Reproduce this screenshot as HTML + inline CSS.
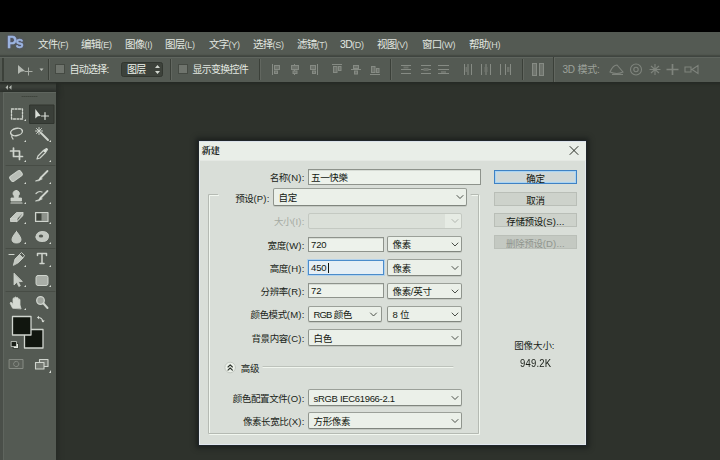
<!DOCTYPE html>
<html lang="zh-CN">
<head>
<meta charset="utf-8">
<title>新建</title>
<style>
html,body{margin:0;padding:0;}
body{width:720px;height:460px;overflow:hidden;position:relative;background:#2e322c;
  font-family:"Liberation Sans","Noto Sans CJK SC",sans-serif;font-size:11px;color:#e1e6df;}
.abs,.abs>*{position:absolute;}
div,span{position:absolute;white-space:nowrap;box-sizing:border-box;}
svg{position:absolute;overflow:visible;}
#topblack{left:0;top:0;width:720px;height:32px;background:#000;}
#menubar{left:0;top:32px;width:720px;height:24px;background:#545a53;}
#menubar span{top:5px;font-size:10.5px;line-height:14px;color:#e3e8e1;letter-spacing:-0.7px;}
#menubar span i{font-style:normal;font-size:9px;letter-spacing:-0.3px;color:#d7dcd5;}
#ps{transform:scale(0.950,1.120);transform-origin:0 85%;left:7.300px;top:0.500px !important;font-size:15.500px !important;line-height:20px !important;font-weight:bold;color:#9bb3df !important;letter-spacing:-1.500px !important;-webkit-text-stroke:0.300px #9bb3df;text-shadow:0 0 3px rgba(80,80,130,0.9);}
#optbar{z-index:3;left:0;top:56px;width:720px;height:26px;background:#545a53;border-top:1px solid #3f4540;box-shadow:inset 0 1px 0 #5f655e,0 1px 2px 1px #262a25;}
#optbar span{font-size:10px;line-height:14px;color:#e3e8e1;letter-spacing:-0.75px;}
.vsep{width:1px;background:#3d423b;top:4px;height:17px;}
.chk{width:10px;height:10px;background:#6d726b;border:1px solid #464b44;top:7px;}
#toolhead{left:0;top:82px;width:56px;height:10px;background:#3e433d;box-shadow:0 0 5px 2px #252925;}
#tools{left:0;top:92px;width:56px;height:368px;background:#545a53;border-left:3px solid #4a4f49;box-shadow:inset 1px 1px 0 #5f655e,0 0 5px 2px #252925;}
/* dialog */
#dlgshadow{left:199px;top:141px;width:387px;height:304px;background:#d9ded8;box-shadow:0 0 0 1px #20262b,0 0 5px 3px rgba(22,25,24,0.75);}
#dlg{left:199px;top:142px;width:387px;height:303px;background:#d9ded8;box-shadow:inset 1px 0 0 #e3e8ec,inset -1px 0 0 #e3e8ec,inset 0 -1px 0 #e1e7ee;color:#0f140d;font-size:9.5px;}
#dlg .title{left:0;top:-1px;width:387px;height:19px;background:#e9eee8;box-shadow:inset 0 1px 0 #dbe2ea,0 1px 0 #e4e8e3;}
#dlg .ttl{font-family:"Liberation Serif","Noto Serif CJK SC",serif;font-weight:bold;font-size:9.5px;line-height:12px;color:#20251e;letter-spacing:-0.4px;}
#dlg i{font-style:normal;letter-spacing:0.2px;}
#dlg .lbl{font-size:9.5px;line-height:13px;color:#1a1f18;letter-spacing:-0.4px;}
.fld{background:#edf2eb;border:1px solid #8e938c;font-size:9.5px;color:#131811;padding-left:2px;letter-spacing:-0.35px;box-shadow:inset 0 1px 0 #d7dcd5;}
.fld i{letter-spacing:-0.1px !important;}
.fld.dd{background:#ebf0e9;padding-left:4.5px;padding-top:1px;border-radius:2px;border-color:#9ba099 #90958e #80857e #90958e;box-shadow:0 1px 0 #c4c9c2;}
.fld.k1 i{letter-spacing:-0.900px !important;}
.fld.k2 i{letter-spacing:-0.320px !important;}
.fld.dis{background:linear-gradient(90deg,#dbe0d9 0,#dbe0d9 136px,#e6ebe4 136px);border-color:#c4c9c2;box-shadow:none;}
.fld.foc{border:1px solid #4b8ccb;background:#e6eff5;box-shadow:0 0 0 1px #b4d2ea;}
.fld.foc b{display:inline-block;position:relative;width:1px;height:10px;background:#0f140d;vertical-align:-2px;margin-left:1px;}
.btn{background:#cdd2cb;border:1px solid #b9beb7;font-size:9.5px;text-align:center;color:#131811;letter-spacing:-0.35px;padding-left:0;padding-top:2px;box-shadow:none;}
.btn.ok{border:1px solid #3f82c4;background:#d0d7d6;box-shadow:inset 0 0 0 1px #a9d3f2,inset 0 0 2px 1px #bfe0f6;}
.btn.dis{color:#90958e;background:#c4c9c2;border-color:#babfb8;}
</style>
</head>
<body>
<div id="topblack"></div>

<div id="menubar">
  <span id="ps">Ps</span>
  <span style="left:38px">文件<i>(F)</i></span>
  <span style="left:81px">编辑<i>(E)</i></span>
  <span style="left:125px">图像<i>(I)</i></span>
  <span style="left:165px">图层<i>(L)</i></span>
  <span style="left:209px">文字<i>(Y)</i></span>
  <span style="left:253px">选择<i>(S)</i></span>
  <span style="left:297px">滤镜<i>(T)</i></span>
  <span style="left:340px">3D<i>(D)</i></span>
  <span style="left:377px">视图<i>(V)</i></span>
  <span style="left:422px">窗口<i>(W)</i></span>
  <span style="left:469px">帮助<i>(H)</i></span>
</div>

<div id="optbar">
 <svg width="720" height="26" viewBox="0 56 720 26" style="left:0;top:-1px" fill="none" stroke="#8e938c" stroke-width="1" stroke-linecap="butt">
  <!-- grip -->
  <rect x="2" y="58" width="2" height="23" fill="#3c413a" stroke="none"/>
  <!-- move tool icon -->
  <path d="M18 65 L18 74 L21 71.700 L25 71 Z" fill="#b4b9b2" stroke="none"/>
  <path d="M28.500 67.500 V75.500 M24.500 71.500 H32.500" stroke="#a7aca5" stroke-width="1"/>
  <path d="M39.500 68.500 h4 l-2 2.500 Z" fill="#b9beb7" stroke="none"/>
  <!-- separators -->
  <g stroke="#3b4039" stroke-width="1">
   <path d="M48.500 59 V80 M170.500 59 V80 M259.500 59 V80 M390.500 59 V80 M522.500 59 V80 M553.500 57 V82"/>
  </g>
  <g stroke="#626760" stroke-width="1">
   <path d="M49.500 59 V80 M171.500 59 V80 M260.500 59 V80 M391.500 59 V80 M523.500 59 V80 M554.500 57 V82"/>
  </g>
  <!-- checkboxes -->
  <rect x="55.500" y="64.500" width="9" height="9" fill="#6f746d" stroke="#454a43"/>
  <rect x="178.500" y="64.500" width="9" height="9" fill="#6f746d" stroke="#454a43"/>
  <!-- dropdown -->
  <rect x="121.500" y="62.500" width="41" height="14" rx="2" fill="#3d423b" stroke="#323730"/>
  <path d="M155 68 l2.500 -3 l2.500 3 Z M155 71 l2.500 3 l2.500 -3 Z" fill="#d3d8d1" stroke="none"/>
  <!-- align icons (disabled look) -->
  <g stroke="#868b84" fill="#6e736c">
   <path d="M272.500 64 V75"/><rect x="274.500" y="65.500" width="5" height="4"/><rect x="274.500" y="71" width="3" height="2.500"/>
   <path d="M294.500 64 V75"/><rect x="291.500" y="65.500" width="7" height="4"/><rect x="293" y="71" width="4" height="2.500"/>
   <path d="M317.500 64 V75"/><rect x="310.500" y="65.500" width="5" height="4"/><rect x="312.500" y="71" width="3" height="2.500"/>
   <path d="M332 64.500 H342"/><rect x="333.500" y="66.500" width="3.500" height="6"/><rect x="338.500" y="66.500" width="2.500" height="4"/>
   <path d="M351 69.500 H361"/><rect x="353.500" y="65.500" width="5" height="3"/><rect x="354.500" y="71" width="3" height="3"/>
   <path d="M370 74.500 H380"/><rect x="371.500" y="66.500" width="3.500" height="6"/><rect x="376.500" y="68.500" width="2.500" height="4"/>
   <path d="M401 65.500 H411 M401 69.500 H411 M401 73.500 H411"/><rect x="403.500" y="66.500" width="5" height="2" stroke="none"/>
   <path d="M421 65.500 H431 M421 69.500 H431 M421 73.500 H431"/><rect x="423.500" y="68" width="5" height="3" stroke="none"/>
   <path d="M438 65.500 H449 M438 69.500 H449 M438 73.500 H449"/><rect x="441" y="71" width="5" height="2" stroke="none"/>
   <path d="M464.500 64 V75 M468 64 V75 M471.500 64 V75"/><rect x="465.500" y="67" width="2" height="5" stroke="none"/>
   <path d="M481.500 64 V75 M486 64 V75 M490.500 64 V75"/><rect x="484.500" y="67" width="3" height="5" stroke="none"/>
   <path d="M500.500 64 V75 M505.500 64 V75 M510.500 64 V75"/><rect x="507" y="67" width="2.500" height="5" stroke="none"/>
   <rect x="532.500" y="63.500" width="4" height="12" /><rect x="539.500" y="63.500" width="4" height="12"/>
  </g>
  <!-- 3D icons -->
  <g stroke="#7f847d" stroke-width="1.100">
   <path d="M610 72 q3 -7 7 -7 l6 7 q-6 3 -13 0 Z M612 74.500 H623"/>
   <circle cx="636" cy="69.500" r="5.500"/><circle cx="636" cy="69.500" r="2.200"/>
   <path d="M655 64 V75 M649.500 69.500 H660.500 M651 66 L659 73 M659 66 L651 73"/>
   <path d="M672.500 64 V75 M666.500 69.500 H678.500" stroke-width="1.700"/>
   <path d="M685 67 h6 v5 h-6 Z M692 69.500 l6 -4 v8 Z"/>
  </g>
 </svg>
 <span style="left:69.500px;top:6px">自动选择:</span>
 <span style="left:127px;top:6px;color:#eff4ed">图层</span>
 <span style="left:192.500px;top:6px">显示变换控件</span>
 <span style="left:562.500px;top:6px;color:#9ca19a;letter-spacing:-0.200px">3D 模式:</span>
</div>


<div id="toolhead"><svg width="58" height="9" viewBox="0 0 58 9"><path d="M8 3 L5.5 5.5 L8 8 Z M11.5 3 L9 5.5 L11.5 8 Z" fill="#ced3cc"/></svg></div>
<div id="tools">
 <svg width="58" height="368" viewBox="0 92 58 368" style="left:-3px;top:0;filter:blur(0.3px)" fill="none" stroke="#cfd4cd" stroke-width="1.2" stroke-linecap="round" stroke-linejoin="round">
  <!-- grip -->
  <path d="M22 96.5 H37" stroke="#3f443d" stroke-width="1" stroke-dasharray="1 1"/>
  <!-- selected tool bg -->
  <rect x="30" y="105" width="24" height="18.500" fill="#3a3f39" stroke="#30352f" stroke-width="1"/>
  <!-- marquee -->
  <rect x="11.5" y="109" width="11" height="10" stroke-dasharray="2 1.5" stroke-width="1.3"/>
  <!-- move -->
  <path d="M35.300 109 L35.300 118.500 L37.800 116.300 L40.800 116 Z" fill="#d9ded7" stroke="none"/>
  <path d="M45 112.500 V119.500 M41.500 116 H48.500" stroke-width="1.200" stroke="#d9ded7"/>
  <!-- lasso -->
  <ellipse cx="16.5" cy="132" rx="6" ry="3.6" transform="rotate(-12 16.5 132)" stroke-width="1.4"/>
  <path d="M12 135 q-1 2 1 4" stroke-width="1.2"/>
  <!-- magic wand -->
  <path d="M41 133 L48 140" stroke-width="2"/>
  <path d="M39 127.5 V134.5 M35.5 131 H42.5 M36.5 128.5 L41.5 133.5 M41.5 128.5 L36.5 133.5" stroke-width="1"/>
  <!-- crop -->
  <path d="M13.5 148 V156.5 H22.5 M10.5 151 H19.5 V159.5" stroke-width="1.7"/>
  <!-- eyedropper -->
  <path d="M37 159 L38 156 L43.5 150.5 L45.5 152.5 L40 158 Z" stroke-width="1.2"/>
  <path d="M43.5 150.5 L46.5 148.5 L47.5 149.5 L45.5 152.5" fill="#e3e8e1"/>
  <!-- separator -->
  <path d="M6 165.5 H55" stroke="#474c45" stroke-width="1"/>
  <!-- healing brush (bandage) -->
  <rect x="9.5" y="173" width="13" height="6" rx="2" transform="rotate(-35 16 176)" fill="#b9beb7" stroke-width="1"/>
  <!-- brush -->
  <path d="M47.5 171 L40.5 178" stroke-width="1.8"/>
  <path d="M40.5 177.5 q-1.5 3 -5 3.5 q3 0.5 6.5 -2 Z" fill="#e3e8e1" stroke-width="0.8"/>
  <!-- stamp -->
  <path d="M16.5 190.5 a3 3 0 0 1 2 5.2 l-0.5 2.3 h3.5 v3 h-10.5 v-3 h3.5 l-0.5 -2.3 a3 3 0 0 1 2.5 -5.2 Z" fill="#c9cec7" stroke-width="0.8"/>
  <path d="M11 203 H22" stroke-width="1.2"/>
  <!-- history brush -->
  <path d="M47.5 191 L40.5 198" stroke-width="1.8"/>
  <path d="M40.5 197.5 q-1.5 3 -5 3.5 q3 0.5 6.5 -2 Z" fill="#e3e8e1" stroke-width="0.8"/>
  <path d="M36 193.5 q3 -3 6 -1.5" stroke-width="1.2"/>
  <!-- eraser -->
  <path d="M10.500 218.500 L16.500 212.500 H23 L17 218.500 Z M10.500 218.500 V221.500 H17 V218.500 M17 221.500 L23 215.500 V212.500" fill="#c3c8c1" stroke-width="0.9"/>
  <!-- gradient -->
  <rect x="35.500" y="212.500" width="12.500" height="9" fill="#8d928b" stroke-width="1.1"/>
  <rect x="36.500" y="213.500" width="5" height="7" fill="#3f443d" stroke="none"/>
  <!-- blur drop -->
  <path d="M16.500 231.500 q4.500 5.500 4.500 8 a4.500 3.500 0 0 1 -9 0 q0 -2.500 4.500 -8 Z" fill="#c3c8c1" stroke-width="0.9"/>
  <!-- sponge/dodge -->
  <path d="M36 237 q0 -5 6 -5.500 q6.500 0 6.500 4.500 q0 5 -5 5.500 q-7.500 0.500 -7.500 -4.500 Z" fill="#c3c8c1" stroke-width="0.9"/>
  <ellipse cx="41" cy="236" rx="2.200" ry="1.600" fill="#555a53" stroke="none"/>
  <!-- separator -->
  <path d="M6 248.500 H55" stroke="#474c45" stroke-width="1"/>
  <!-- pen -->
  <path d="M9 254.500 H14" stroke-width="1.200"/>
  <path d="M13.500 265 L15 259 L19.500 254.500 L23 258 L18.500 262.500 Z" fill="#c3c8c1" stroke-width="0.9"/>
  <path d="M19.500 254.500 L21.500 252.500 L24.500 255.500 L23 258" stroke-width="0.9"/>
  <!-- T -->
  <path d="M37.500 255.500 V253.500 H46.500 V255.500 M42 253.500 V263.500 M40 263.500 H44" stroke-width="1.500"/>
  <!-- path select arrow -->
  <path d="M14 273.500 L14 285 L16.800 282.300 L18.800 286.500 L20.300 285.800 L18.300 281.700 L22 281.500 Z" fill="#c9cec7" stroke-width="0.8"/>
  <!-- rectangle shape -->
  <rect x="36" y="275.500" width="12" height="10" rx="2" fill="#a9aea7" stroke-width="1"/>
  <!-- separator -->
  <path d="M6 291.500 H55" stroke="#474c45" stroke-width="1"/>
  <!-- hand -->
  <path d="M12.500 308 L10 303 q0.800 -1.300 2 0 l1 1.500 V298.500 q0.800 -1 1.600 0 V297.500 q0.900 -1 1.800 0 V298 q0.900 -1 1.800 0 V299.500 q0.900 -1 1.800 0 V305 L21 308.500 Z" fill="#d5dad3" stroke-width="0.8"/>
  <!-- zoom -->
  <circle cx="40.500" cy="300.500" r="3.800" fill="#9fa49d" stroke-width="1.300"/>
  <path d="M43.500 303.500 L47.500 308" stroke-width="2"/>
  <!-- tiny corner triangles -->
  <g fill="#d7dcd5" stroke="none">
   <path d="M26 119 v2 h-2 Z M26 140 v2 h-2 Z M51 140 v2 h-2 Z M26 160 v2 h-2 Z M51 160 v2 h-2 Z"/>
   <path d="M26 182 v2 h-2 Z M51 182 v2 h-2 Z M26 202 v2 h-2 Z M51 202 v2 h-2 Z M26 222 v2 h-2 Z M51 222 v2 h-2 Z M26 242 v2 h-2 Z M51 242 v2 h-2 Z"/>
   <path d="M26 265 v2 h-2 Z M51 265 v2 h-2 Z M26 285 v2 h-2 Z M51 285 v2 h-2 Z M26 308 v2 h-2 Z M51 370 v3 h-2 Z"/>
  </g>
  <!-- colour swatches -->
  <rect x="24.500" y="329.500" width="18.500" height="18.500" fill="#11160f" stroke="#d0d5ce" stroke-width="1.300"/>
  <rect x="12.500" y="316.500" width="18.500" height="18.500" fill="#11160f" stroke="#d0d5ce" stroke-width="1.300"/>
  <path d="M38 317.500 q4 0 5 4" stroke-width="1.100"/>
  <path d="M37 317.500 l2 -1.800 v3.600 Z M43 322.500 l-1.800 -2 h3.600 Z" fill="#d7dcd5" stroke="none"/>
  <rect x="13.500" y="343.500" width="5" height="5" fill="#e5eae3" stroke="#292e27" stroke-width="0.800"/>
  <rect x="11.500" y="341.500" width="5" height="5" fill="#191e17" stroke="#c9cec7" stroke-width="0.800"/>
  <!-- quick mask -->
  <rect x="9.500" y="359.500" width="13.500" height="9" fill="#5b6059" stroke="#868b84" stroke-width="1"/>
  <circle cx="16.200" cy="364" r="2.600" stroke="#8b9089" stroke-width="1" stroke-dasharray="1.500 1"/>
  <!-- screen mode -->
  <rect x="39.500" y="359.500" width="8.500" height="7" fill="#737871" stroke="#d0d5ce" stroke-width="1.100"/>
  <rect x="35.500" y="362.500" width="8.500" height="6.500" fill="#737871" stroke="#d0d5ce" stroke-width="1.100"/>
 </svg>
</div>

<div id="dlgshadow"></div>
<div id="dlg">
 <div class="title"></div>
 <span class="ttl" style="left:2.5px;top:2.5px;">新建</span>
 <span class="lbl" style="right:281.5px;top:28.69999999999999px;">名称<i>(N):</i></span>
 <span class="lbl" style="right:316.5px;top:49.5px;">预设<i>(P):</i></span>
 <span class="lbl" style="right:281.5px;top:73.0px;color:#a5aaa3;">大小<i>(I):</i></span>
 <span class="lbl" style="right:281.5px;top:96.5px;">宽度<i>(W):</i></span>
 <span class="lbl" style="right:281.5px;top:120.0px;">高度<i>(H):</i></span>
 <span class="lbl" style="right:281.5px;top:143.0px;">分辨率<i>(R):</i></span>
 <span class="lbl" style="right:281.5px;top:166.0px;">颜色模式<i>(M):</i></span>
 <span class="lbl" style="right:281.5px;top:189.5px;">背景内容<i>(C):</i></span>
 <span class="lbl" style="right:281.5px;top:249.5px;">颜色配置文件<i>(O):</i></span>
 <span class="lbl" style="right:281.5px;top:273.0px;">像素长宽比<i>(X):</i></span>
 <span class="lbl" style="left:41.80000000000001px;top:219.5px;">高级</span>
 <div class="fld" style="left:109px;top:27px;width:173px;height:16px;line-height:14px;padding-top:1px;">五一快樂</div>
 <div class="fld dd" style="left:74px;top:46px;width:194px;height:18px;line-height:16px;">自定</div>
 <div class="fld dd dis" style="left:109px;top:71px;width:154px;height:16px;line-height:14px;"></div>
 <div class="fld" style="left:109px;top:95px;width:76px;height:15px;line-height:13px;"><i>720</i></div>
 <div class="fld dd" style="left:188px;top:94px;width:75px;height:16px;line-height:14px;">像素</div>
 <div class="fld foc" style="left:109px;top:118px;width:76px;height:15px;line-height:13px;"><i>450<b></b></i></div>
 <div class="fld dd" style="left:188px;top:117px;width:75px;height:17px;line-height:15px;">像素</div>
 <div class="fld" style="left:109px;top:141px;width:76px;height:15px;line-height:13px;"><i>72</i></div>
 <div class="fld dd" style="left:188px;top:141px;width:75px;height:16px;line-height:14px;">像素<i>/</i>英寸</div>
 <div class="fld dd k1" style="left:109px;top:164px;width:74px;height:16px;line-height:14px;"><i>RGB</i> 颜色</div>
 <div class="fld dd" style="left:188px;top:164px;width:75px;height:16px;line-height:14px;"><i>8</i> 位</div>
 <div class="fld dd" style="left:109px;top:187px;width:154px;height:17px;line-height:15px;">白色</div>
 <div class="fld dd k2" style="left:109px;top:247px;width:154px;height:17px;line-height:15px;"><i>sRGB IEC61966-2.1</i></div>
 <div class="fld dd" style="left:109px;top:270px;width:154px;height:17px;line-height:15px;">方形像素</div>
 <div class="btn ok" style="left:295px;top:28px;width:83px;height:14px;line-height:12px;">确定</div>
 <div class="btn" style="left:295px;top:50px;width:83px;height:14px;line-height:12px;">取消</div>
 <div class="btn" style="left:295px;top:71px;width:83px;height:14px;line-height:12px;">存储预设<i>(S)...</i></div>
 <div class="btn dis" style="left:295px;top:93px;width:83px;height:14px;line-height:12px;">删除预设<i>(D)...</i></div>
 <span class="lbl" style="left:315.20000000000005px;top:196.5px;letter-spacing:-0.100px;">图像大小<i>:</i></span>
 <span class="lbl" style="left:321px;top:214.5px;font-size:10px;transform:scale(0.950,1.100);transform-origin:0 50%;"><i>949.2K</i></span>
 <svg width="387" height="303" viewBox="199 142 387 303" style="left:0;top:0" fill="none" stroke-width="1" stroke-linecap="round" stroke-linejoin="round"><path d="M570 146.500 L578 154.500 M578 146.500 L570 154.500" stroke="#292e27" stroke-width="1"/><path d="M217.500 194.500 H208.500 V433.500 H478.500 V194.500 H471" stroke="#f2f7f0" stroke-width="1" transform="translate(1,1)"/><path d="M217.500 194.500 H208.500 V433.500 H478.500 V194.500 H471" stroke="#b5bab3" stroke-width="1"/><path d="M263 366.500 H453" stroke="#bdc2bb" stroke-width="1"/><path d="M263 367.500 H453" stroke="#f0f5ee" stroke-width="1"/><circle cx="230.200" cy="367.500" r="5.300" fill="#ebf0e9" stroke="#c3c8c1" stroke-width="1"/><path d="M228 367 L230.200 364.800 L232.400 367 M228 370.200 L230.200 368 L232.400 370.200" stroke="#292e27" stroke-width="1.100"/><path d="M457 195.5 L460 198.5 L463 195.5" stroke="#4a4f48"/><path d="M452 219.5 L455 222.5 L458 219.5" stroke="#b1b6af"/><path d="M452 243.0 L455 246.0 L458 243.0" stroke="#4a4f48"/><path d="M452 266.5 L455 269.5 L458 266.5" stroke="#4a4f48"/><path d="M452 290.0 L455 293.0 L458 290.0" stroke="#4a4f48"/><path d="M370.5 313.0 L373.5 316.0 L376.5 313.0" stroke="#4a4f48"/><path d="M452 313.0 L455 316.0 L458 313.0" stroke="#4a4f48"/><path d="M452 336.5 L455 339.5 L458 336.5" stroke="#4a4f48"/><path d="M452 396.5 L455 399.5 L458 396.5" stroke="#4a4f48"/><path d="M452 419.5 L455 422.5 L458 419.5" stroke="#4a4f48"/></svg>
</div>
</body>
</html>
